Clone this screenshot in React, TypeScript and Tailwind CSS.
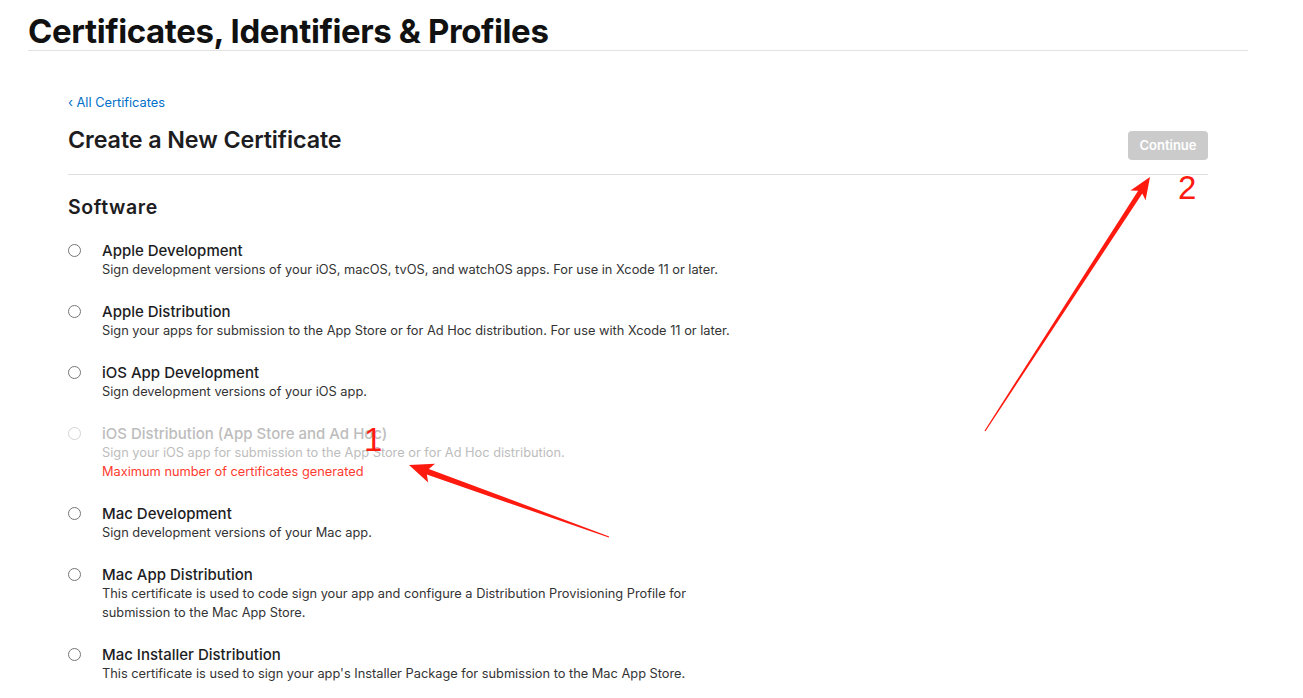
import React from 'react';

type Cert = {
  title: string;
  desc: string[];
  disabled?: boolean;
  error?: string;
};

const certs: Cert[] = [
  {
    title: 'Apple Development',
    desc: ['Sign development versions of your iOS, macOS, tvOS, and watchOS apps. For use in Xcode 11 or later.'],
  },
  {
    title: 'Apple Distribution',
    desc: ['Sign your apps for submission to the App Store or for Ad Hoc distribution. For use with Xcode 11 or later.'],
  },
  {
    title: 'iOS App Development',
    desc: ['Sign development versions of your iOS app.'],
  },
  {
    title: 'iOS Distribution (App Store and Ad Hoc)',
    desc: ['Sign your iOS app for submission to the App Store or for Ad Hoc distribution.'],
    disabled: true,
    error: 'Maximum number of certificates generated',
  },
  {
    title: 'Mac Development',
    desc: ['Sign development versions of your Mac app.'],
  },
  {
    title: 'Mac App Distribution',
    desc: [
      'This certificate is used to code sign your app and configure a Distribution Provisioning Profile for',
      'submission to the Mac App Store.',
    ],
  },
  {
    title: 'Mac Installer Distribution',
    desc: ["This certificate is used to sign your app's Installer Package for submission to the Mac App Store."],
  },
];

// tapered annotation arrow, thin tail -> wide head
function arrowPoints(x1: number, y1: number, x2: number, y2: number, head: number, wing: number, shaft: number) {
  const dx = x2 - x1;
  const dy = y2 - y1;
  const len = Math.hypot(dx, dy);
  const ux = dx / len;
  const uy = dy / len;
  const nx = -uy;
  const ny = ux;
  const bx = x2 - ux * head;
  const by = y2 - uy * head;
  const jx = bx + ux * 4;
  const jy = by + uy * 4;
  const pts = [
    [x1 + nx * 0.6, y1 + ny * 0.6],
    [jx + nx * shaft, jy + ny * shaft],
    [bx + nx * wing, by + ny * wing],
    [x2, y2],
    [bx - nx * wing, by - ny * wing],
    [jx - nx * shaft, jy - ny * shaft],
    [x1 - nx * 0.6, y1 - ny * 0.6],
  ];
  return pts.map((p) => p.join(',')).join(' ');
}

const Radio: React.FC<{ disabled?: boolean }> = ({ disabled }) => (
  <span
    className={`mt-[3px] block h-[13px] w-[13px] shrink-0 rounded-full border bg-white ${
      disabled ? 'border-[#d4d4d4]' : 'border-[#767676]'
    }`}
  />
);

const App: React.FC = () => {
  return (
    <div className="relative min-h-screen bg-white font-['Inter','Liberation_Sans',sans-serif] text-[#1d1d1f]">
      <div className="mx-[28px] w-[1220px]">
        <h1 className="pt-[14px] pb-[2px] text-[33px] font-bold leading-[34px] tracking-[-0.4px] text-[#111]">
          Certificates, Identifiers &amp; Profiles
        </h1>
        <div className="h-px bg-[#e3e3e3]" />

        <div className="px-[40px] pt-[44px]">
          <a className="block text-[12.8px] leading-[16px] text-[#0070c9]">‹ All Certificates</a>
          <div className="flex items-start justify-between pb-[14px]">
            <h2 className="mt-[15px] text-[23.3px] font-semibold leading-[28px] tracking-[-0.1px] text-[#1d1d1f]">
              Create a New Certificate
            </h2>
            <button className="mt-[20px] h-[29px] w-[80px] rounded-[4px] bg-[#cbcbcb] text-[13px] font-semibold text-white">
              Continue
            </button>
          </div>
          <div className="h-px bg-[#dedede]" />

          <h3 className="mt-[19px] text-[19.5px] font-semibold leading-[26px] tracking-[0.6px] text-[#1d1d1f]">Software</h3>

          <div className="mt-[21px] flex flex-col gap-[23px]">
            {certs.map((c) => (
              <div key={c.title} className="flex gap-[21px]">
                <Radio disabled={c.disabled} />
                <div>
                  <div
                    className={`text-[15px] font-medium leading-[19px] ${
                      c.disabled ? 'text-[#bdbdbd]' : 'text-[#1d1d1f]'
                    }`}
                  >
                    {c.title}
                  </div>
                  {c.desc.map((d) => (
                    <div
                      key={d}
                      className={`text-[12.8px] leading-[19px] ${c.disabled ? 'text-[#bdbdbd]' : 'text-[#333]'}`}
                    >
                      {d}
                    </div>
                  ))}
                  {c.error && <div className="text-[12.8px] leading-[19px] text-[#ff3b30]">{c.error}</div>}
                </div>
              </div>
            ))}
          </div>
        </div>
      </div>

      {/* annotations drawn over the screenshot */}
      <svg className="pointer-events-none absolute left-0 top-0" width="1303" height="698">
        <polygon points={arrowPoints(985, 431, 1150, 177, 22, 9, 2.5)} fill="#ff1a10" />
        <polygon points={arrowPoints(609, 537, 409, 465, 24, 10, 3)} fill="#ff1a10" />
      </svg>
      <span className="pointer-events-none absolute left-[364px] top-[420px] font-['Liberation_Sans',sans-serif] text-[33px] leading-[40px] text-[#ff1a10]">
        1
      </span>
      <span className="pointer-events-none absolute left-[1178px] top-[168px] font-['Liberation_Sans',sans-serif] text-[33px] leading-[40px] text-[#ff1a10]">
        2
      </span>
    </div>
  );
};

export default App;
